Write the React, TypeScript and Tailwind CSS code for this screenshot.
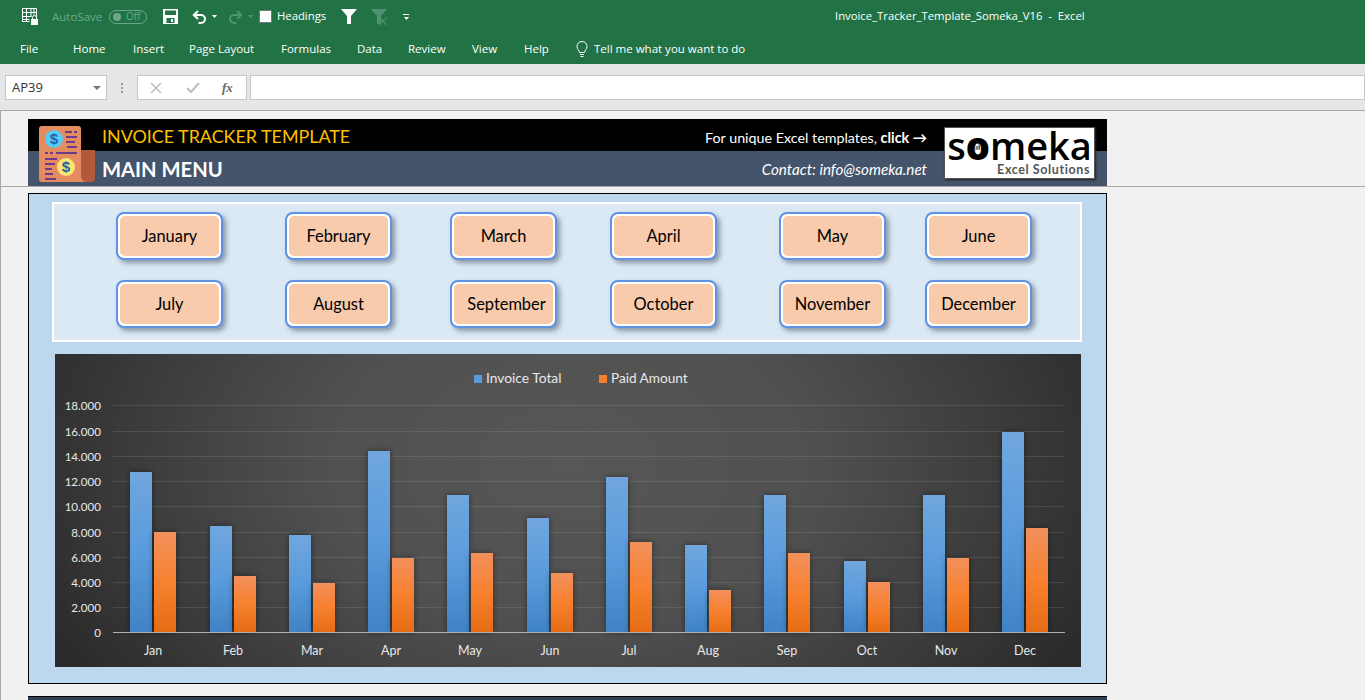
import React from 'react';

const months = [
    ['January', 'February', 'March', 'April', 'May', 'June'],
    ['July', 'August', 'September', 'October', 'November', 'December'],
];

const tabs = [
    { label: 'File', cls: 'w-[53px]' },
    { label: 'Home', cls: 'w-[60px]' },
    { label: 'Insert', cls: 'w-[56px]' },
    { label: 'Page Layout', cls: 'w-[92px]' },
    { label: 'Formulas', cls: 'w-[76px]' },
    { label: 'Data', cls: 'w-[51px]' },
    { label: 'Review', cls: 'w-[64px]' },
    { label: 'View', cls: 'w-[52px]' },
    { label: 'Help', cls: 'w-[52px]' },
];

// x of the blue bar, top of blue, top of orange (orange sits 24px right of blue)
const bars = [
    { m: 'Jan', x: 130, b: 472, o: 532 },
    { m: 'Feb', x: 210, b: 526, o: 576 },
    { m: 'Mar', x: 289, b: 535, o: 583 },
    { m: 'Apr', x: 368, b: 451, o: 558 },
    { m: 'May', x: 447, b: 495, o: 553 },
    { m: 'Jun', x: 527, b: 518, o: 573 },
    { m: 'Jul', x: 606, b: 477, o: 542 },
    { m: 'Aug', x: 685, b: 545, o: 590 },
    { m: 'Sep', x: 764, b: 495, o: 553 },
    { m: 'Oct', x: 844, b: 561, o: 582 },
    { m: 'Nov', x: 923, b: 495, o: 558 },
    { m: 'Dec', x: 1002, b: 432, o: 528 },
];

const ticks = [
    { v: '18.000', y: 405 },
    { v: '16.000', y: 431 },
    { v: '14.000', y: 456 },
    { v: '12.000', y: 481 },
    { v: '10.000', y: 506 },
    { v: '8.000', y: 532 },
    { v: '6.000', y: 557 },
    { v: '4.000', y: 582 },
    { v: '2.000', y: 607 },
];

function GridLockIcon() {
    return (
        <svg width="18" height="20" viewBox="0 0 18 20" fill="none" stroke="#fff" strokeWidth="1">
            <path d="M1.5 1.5h14v9M1.5 1.5v13h7M1.5 5.5h14M1.5 9.5h9M1.5 12.5h7M5.5 1.5v13M10 1.5v8M13 1.5v6" />
            <path d="M11.5 12v-1.500a2 2 0 0 1 4 0V12" />
            <rect x="10" y="12" width="7" height="6" fill="#fff" stroke="none" />
        </svg>
    );
}

function SaveIcon() {
    return (
        <svg width="15" height="15" viewBox="0 0 15 15">
            <path fillRule="evenodd" fill="#fff" d="M0 0h15v15H0zM2 1.500v4.500h11V1.500zM3.500 9v5h8V9zM8 10h2v3H8z" />
        </svg>
    );
}

function UndoIcon({ flip, color }: { flip?: boolean; color: string }) {
    return (
        <svg width="15" height="14" viewBox="0 0 15 14" fill="none" stroke={color} strokeWidth="2" className={flip ? '-scale-x-100' : ''}>
            <path d="M6 1L1.800 5l4.200 4" />
            <path d="M2 5h7a4 4 0 0 1 0 8H6.500" />
        </svg>
    );
}

function Caret({ color, big }: { color: string; big?: boolean }) {
    return (
        <svg width={big ? 8 : 5} height={big ? 4 : 3} viewBox="0 0 5 3" preserveAspectRatio="none"><path d="M0 0h5L2.500 3z" fill={color} /></svg>
    );
}

function FilterIcon({ color }: { color: string }) {
    return (
        <svg width="16" height="15" viewBox="0 0 16 15"><path d="M0 0h16L10 7v8H6V7z" fill={color} /></svg>
    );
}

function ReceiptIcon() {
    const line = '#6b3a8c';
    return (
        <svg width="56" height="56" viewBox="0 0 56 56" className="absolute left-[11px] top-[7px]">
            <path d="M42 24h14v28a4 4 0 0 1-4 4H38z" fill="#b05a3a" />
            <rect x="0" y="0" width="42" height="56" rx="3" fill="#e58b60" />
            <path d="M42 50a6 6 0 0 0 5 6H38z" fill="#e58b60" />
            <circle cx="15" cy="13" r="9" fill="#56cdf2" />
            <circle cx="27" cy="41" r="9" fill="#fce672" />
            <text x="15" y="18" textAnchor="middle" fontSize="15" fontWeight="700" fill="#2b5ea8" fontFamily="'Liberation Sans', sans-serif">$</text>
            <text x="27" y="46" textAnchor="middle" fontSize="15" fontWeight="700" fill="#2b5ea8" fontFamily="'Liberation Sans', sans-serif">$</text>
            <g stroke={line} strokeWidth="2">
                <path d="M26 6h7M35 6h3M27 11h11M27 16h9M28 21h10M6 27h3M11 27h3M17 27h21M6 33h12M6 38h10M6 43h7M6 48h8M6 53h11" />
            </g>
        </svg>
    );
}

function MonthButton({ label }: { label: string }) {
    return (
        <div className="w-[107px] h-12 rounded-lg border-2 border-[#5f92e2] bg-white p-[2px] shadow-[3px_3px_5px_rgba(40,50,70,0.45)]">
            <div className={`h-full rounded-[5px] bg-[#f8cbad] flex items-center justify-center pt-px text-[16.400px] text-black font-['Lato',sans-serif] ${label === 'September' ? 'pl-[6px]' : ''}`}>
                {label}
            </div>
        </div>
    );
}

function SalesChart() {
    const ox = 55;
    const oy = 354;
    return (
        <svg width="1026" height="313" viewBox="0 0 1026 313" className="block" fontFamily="'Lato', sans-serif">
            <defs>
                <linearGradient id="blueBar" x1="0" y1="0" x2="0" y2="1">
                    <stop offset="0" stopColor="#70a6dd" />
                    <stop offset="0.5" stopColor="#5a9bdc" />
                    <stop offset="1" stopColor="#3f83c6" />
                </linearGradient>
                <linearGradient id="orangeBar" x1="0" y1="0" x2="0" y2="1">
                    <stop offset="0" stopColor="#f2905c" />
                    <stop offset="0.5" stopColor="#f7812f" />
                    <stop offset="1" stopColor="#e56c16" />
                </linearGradient>
                <filter id="barShadow" x="-40%" y="-10%" width="180%" height="120%">
                    <feDropShadow dx="0" dy="0" stdDeviation="3" floodColor="#000" floodOpacity="0.45" />
                </filter>
            </defs>
            {ticks.map((t) => (
                <g key={t.v}>
                    <line x1={113 - ox} x2={1065 - ox} y1={t.y - oy + 0.5} y2={t.y - oy + 0.5} stroke="#ffffff" strokeOpacity="0.1" />
                    <text x={101 - ox} y={t.y - oy + 5} textAnchor="end" fontSize="11.600" fill="#e8e8e8">{t.v}</text>
                </g>
            ))}
            <text x={101 - ox} y={637 - oy} textAnchor="end" fontSize="11.600" fill="#e8e8e8">0</text>
            {bars.map((d) => (
                <g key={d.m}>
                    <rect x={d.x - ox} y={d.b - oy} width="22" height={632 - d.b} fill="url(#blueBar)" filter="url(#barShadow)" />
                    <rect x={d.x + 24 - ox} y={d.o - oy} width="22" height={632 - d.o} fill="url(#orangeBar)" filter="url(#barShadow)" />
                    <text x={d.x + 23 - ox} y={654.500 - oy} textAnchor="middle" fontSize="12.500" fill="#e8e8e8">{d.m}</text>
                </g>
            ))}
            <line x1={113 - ox} x2={1065 - ox} y1={632.5 - oy} y2={632.5 - oy} stroke="#b0b0b0" />
            <rect x={474 - ox} y={375 - oy} width="8" height="8" fill="#5b9bdc" />
            <text x={486 - ox} y={383 - oy} fontSize="13.800" fill="#e8e8e8">Invoice Total</text>
            <rect x={599 - ox} y={375 - oy} width="8" height="8" fill="#f5812f" />
            <text x={611 - ox} y={383 - oy} fontSize="13.600" fill="#e8e8e8">Paid Amount</text>
        </svg>
    );
}

export default function App() {
    return (
        <div className="h-[700px] overflow-hidden flex flex-col bg-[#f1f1f1] font-['Open_Sans',sans-serif]">
            {/* title bar */}
            <div className="h-8 shrink-0 bg-[#217346] flex items-center pt-px text-white text-[11.500px]">
                <div className="ml-[21px]"><GridLockIcon /></div>
                <span className="ml-[13px] w-[50px] text-[#6fa588]">AutoSave</span>
                <div className="ml-[7px] w-[38px] h-[14px] rounded-full border border-[#6fa588] flex items-center pl-[3px]">
                    <span className="w-2 h-2 rounded-full bg-[#6fa588]" />
                    <span className="ml-[5px] text-[10px] text-[#6fa588]">Off</span>
                </div>
                <div className="ml-4"><SaveIcon /></div>
                <div className="ml-[14px]"><UndoIcon color="#fff" /></div>
                <div className="ml-[5px]"><Caret color="#fff" /></div>
                <div className="ml-[11px]"><UndoIcon flip color="#4f9271" /></div>
                <div className="ml-[5px]"><Caret color="#4f9271" /></div>
                <span className="ml-[6px] w-[13px] h-[13px] bg-white border border-[#7a7a7a]" />
                <span className="ml-[5px] w-[64px] text-[11.300px]">Headings</span>
                <FilterIcon color="#fff" />
                <div className="ml-[14px] relative">
                    <FilterIcon color="#4f9271" />
                    <svg width="8" height="8" viewBox="0 0 8 8" stroke="#4f9271" strokeWidth="1.200" className="absolute left-[8px] top-[8px]"><path d="M0 0l8 8M8 0L0 8" /></svg>
                </div>
                <div className="ml-4 flex flex-col items-center gap-[2px]">
                    <span className="w-[6px] h-px bg-white" />
                    <Caret color="#fff" />
                </div>
                <span className="ml-[426px] text-[11.300px] whitespace-pre">Invoice_Tracker_Template_Someka_V16  -  Excel</span>
            </div>

            {/* ribbon tabs */}
            <div className="h-8 shrink-0 bg-[#217346] flex items-center pl-5 pt-px text-white text-[11.500px]">
                {tabs.map((t) => (
                    <span key={t.label} className={t.cls}>{t.label}</span>
                ))}
                <svg width="14" height="16" viewBox="0 0 14 16" fill="none" stroke="#fff" className="-ml-[1px]">
                    <path d="M4.500 11.500c0-2-2.500-3-2.500-6a5 5 0 0 1 10 0c0 3-2.500 4-2.500 6zM5 13.500h4M5.500 15.500h3" />
                </svg>
                <span className="ml-[5px]">Tell me what you want to do</span>
            </div>

            {/* formula bar */}
            <div className="h-[47px] shrink-0 bg-[#e6e6e6] border-b border-[#a8a8a8] flex pt-[11px] pl-[5px]">
                <div className="w-[102px] h-[25px] bg-white border border-[#c6c6c6] flex items-center justify-between pl-[6px] pr-[5px] text-[13px] text-[#333]">
                    AP39
                    <Caret big color="#777" />
                </div>
                <div className="w-[30px] h-[25px] flex flex-col items-center justify-center gap-[2px]">
                    <span className="w-[2px] h-[2px] bg-[#9a9a9a]" />
                    <span className="w-[2px] h-[2px] bg-[#9a9a9a]" />
                    <span className="w-[2px] h-[2px] bg-[#9a9a9a]" />
                </div>
                <div className="w-[110px] h-[25px] bg-white border border-[#c6c6c6] flex items-center pl-3">
                    <svg width="12" height="12" viewBox="0 0 12 12" stroke="#bdbdbd" strokeWidth="1.500" fill="none"><path d="M1 1l10 10M11 1L1 11" /></svg>
                    <svg width="14" height="12" viewBox="0 0 14 12" stroke="#bdbdbd" strokeWidth="2" fill="none" className="ml-[24px]"><path d="M1 6l4 4 8-9" /></svg>
                    <span className="ml-[22px] text-[13px] italic font-bold text-[#666] font-['Liberation_Serif',serif]">fx</span>
                </div>
                <div className="ml-[3px] flex-1 h-[25px] bg-white border border-[#c6c6c6]" />
            </div>

            {/* sheet */}
            <div className="flex-1 border-l border-[#a8a8a8] font-['Lato',sans-serif]">
                <div className="h-[76px] border-b border-[#a8a8a8] pt-2 pl-[27px]">
                    <div className="relative w-[1079px] h-[67px] flex flex-col">
                        <div className="h-8 bg-black flex items-center pl-[74px] pr-[180px] pt-[3px]">
                            <span className="text-[17.900px] text-[#ffc000]">INVOICE TRACKER TEMPLATE</span>
                            <span className="ml-auto pt-[2px] text-[14.300px] text-white">For unique Excel templates, <b>click →</b></span>
                        </div>
                        <div className="flex-1 bg-[#44546a] flex items-center pl-[74px] pr-[180px] pt-[2px]">
                            <span className="text-[20.200px] font-bold text-white">MAIN MENU</span>
                            <span className="ml-auto text-[15.200px] italic text-white">Contact: info@someka.net</span>
                        </div>
                        <ReceiptIcon />
                        <div className="absolute left-[916px] top-2 w-[151px] h-[52px] bg-white border border-[#555] shadow-[1px_1px_2px_#222] flex flex-col items-center">
                            <span className="text-[38px] leading-[34px] font-semibold text-black font-['Open_Sans',sans-serif]">
                                s<span className="relative font-extrabold">o<svg width="6" height="6" viewBox="0 0 8 7" fill="#555" className="absolute left-[8px] top-[25px]"><path d="M0 4h2v3H0zM3 2h2v5H3zM6 0h2v7H6z" /></svg></span>meka
                            </span>
                            <span className="self-end mr-[4px] mt-[1px] text-[12.500px] leading-[14px] font-bold tracking-[0.6px] text-[#555]">Excel Solutions</span>
                        </div>
                    </div>
                </div>

                <div className="mt-[6px] ml-[27px] w-[1079px] h-[491px] border border-black bg-[#bdd7ee]">
                    <div className="ml-[23px] mt-2 w-[1030px] h-[140px] border-2 border-white bg-[#dbe9f5] pl-[62px] pt-2">
                        <div className="grid grid-cols-[169px_165px_160px_169px_146px_107px] gap-y-5">
                            {months.flat().map((m) => (
                                <MonthButton key={m} label={m} />
                            ))}
                        </div>
                    </div>
                    <div className="ml-[26px] mt-3 w-[1026px] h-[313px] bg-[radial-gradient(ellipse_60%_130%_at_50%_35%,#575757_0%,#505050_40%,#3c3c3c_70%,#2a2a2a_95%)]">
                        <SalesChart />
                    </div>
                </div>

                <div className="mt-3 ml-[27px] w-[1079px] h-10 border-t border-black bg-[#2f3f55]" />
            </div>
        </div>
    );
}
